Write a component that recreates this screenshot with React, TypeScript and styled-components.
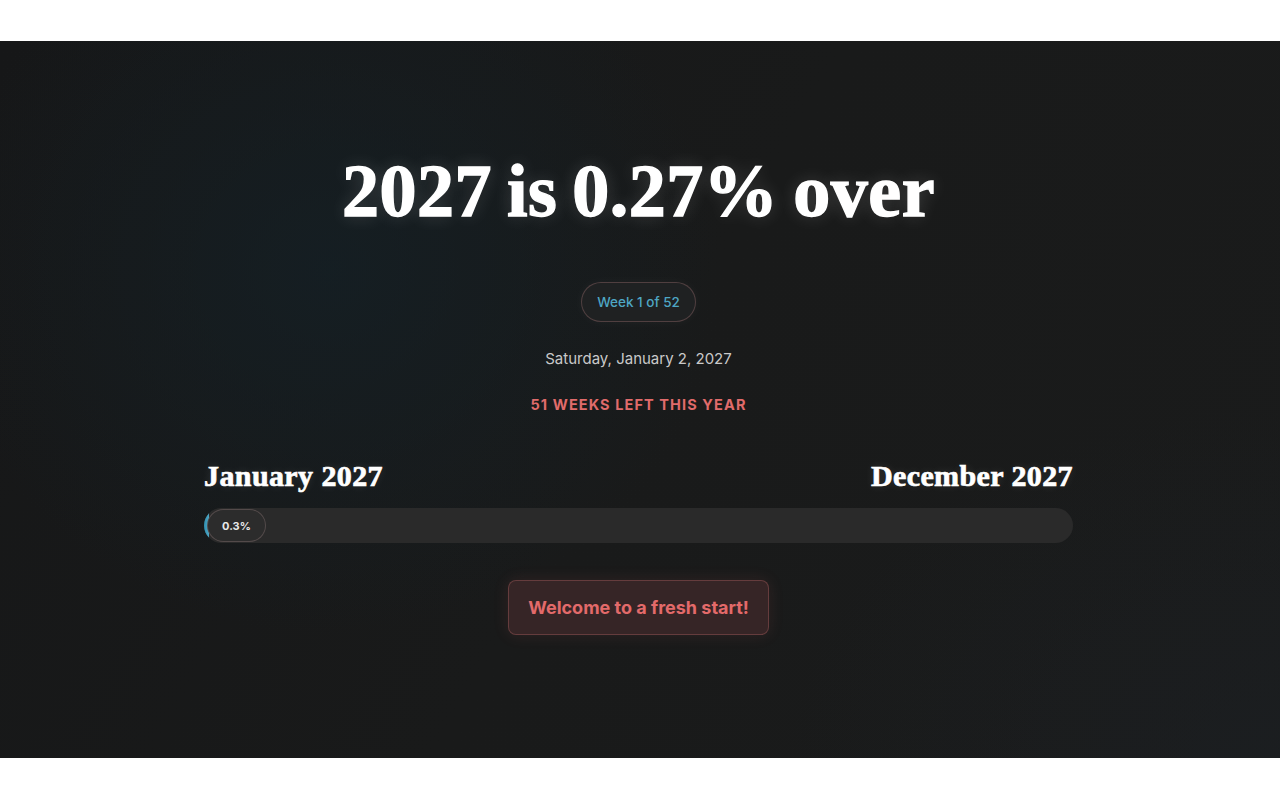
import * as React from 'react';
import styled, { createGlobalStyle } from 'styled-components';

const GlobalStyle = createGlobalStyle`
  html, body {
    margin: 0;
    padding: 0;
    background: #ffffff;
  }
  body {
    font-family: Inter, 'Noto Sans', sans-serif;
  }
`;

const YEAR = 2027;
const WEEK = 1;
const TOTAL_WEEKS = 52;
const PERCENT = 0.27;

const Page = styled.div`
  padding: 41px 0 42px;
`;

const Hero = styled.section`
  height: 717px;
  box-sizing: border-box;
  display: flex;
  flex-direction: column;
  align-items: center;
  padding: 108px 3px 0 0;
  background:
    radial-gradient(ellipse 560px 520px at 330px 230px, rgba(20, 32, 38, 0.75), rgba(20, 32, 38, 0) 70%),
    radial-gradient(ellipse 700px 500px at 1280px 717px, rgba(28, 32, 36, 0.6), rgba(28, 32, 36, 0) 70%),
    linear-gradient(120deg, #161718 0%, #191a1a 50%, #1a1b1b 100%);
  overflow: hidden;
`;

const Title = styled.h1`
  margin: 0;
  font-family: 'Liberation Serif', serif;
  font-weight: 700;
  font-size: 74px;
  line-height: 84px;
  letter-spacing: 0.5px;
  word-spacing: -4px;
  color: #ffffff;
  -webkit-text-stroke: 1.4px #ffffff;
  text-shadow: 0 0 18px rgba(255, 255, 255, 0.18);
`;

const Badge = styled.div`
  margin-top: 49px;
  height: 40px;
  box-sizing: border-box;
  padding: 0 15px;
  display: flex;
  align-items: center;
  border-radius: 20px;
  border: 1px solid rgba(120, 90, 90, 0.55);
  background: #1f2122;
  box-shadow: 0 0 12px rgba(255, 255, 255, 0.04);
  color: #4ea6c4;
  font-size: 13.5px;
  font-weight: 500;
`;

const DateLine = styled.div`
  margin-top: 27px;
  font-size: 15px;
  color: #c9c9c9;
`;

const WeeksLeft = styled.div`
  margin-top: 28px;
  font-size: 14.5px;
  font-weight: 700;
  letter-spacing: 1.1px;
  text-transform: uppercase;
  color: #e06b6b;
`;

const Timeline = styled.div`
  margin-top: 45px;
  width: 869px;
`;

const Labels = styled.div`
  display: flex;
  justify-content: space-between;
  align-items: center;
  height: 36px;
`;

const MonthLabel = styled.span`
  font-family: 'Liberation Serif', serif;
  font-weight: 700;
  font-size: 30px;
  letter-spacing: 0.4px;
  color: #ffffff;
  -webkit-text-stroke: 0.7px #ffffff;
  text-shadow: 0 0 10px rgba(255, 255, 255, 0.12);
`;

const Track = styled.div`
  position: relative;
  margin-top: 14px;
  height: 35px;
  border-radius: 18px;
  background: #2a2a2a;
  overflow: hidden;
`;

const Fill = styled.div`
  position: absolute;
  left: 0;
  top: 0;
  bottom: 0;
  background: linear-gradient(90deg, #2f8fb0, #4ea6c4);
  border-radius: 18px 0 0 18px;
`;

const Marker = styled.div`
  position: absolute;
  left: 3px;
  top: 1px;
  height: 33px;
  width: 59px;
  box-sizing: border-box;
  display: flex;
  align-items: center;
  justify-content: center;
  border-radius: 17px;
  border: 1px solid rgba(110, 95, 95, 0.6);
  background: #2c2c2c;
  color: #e8e8e8;
  font-size: 11px;
  font-weight: 700;
`;

const Greeting = styled.button`
  margin-top: 37px;
  height: 55px;
  padding: 0 19px;
  border-radius: 8px;
  border: 1px solid rgba(140, 80, 80, 0.55);
  background: #362526;
  box-shadow: 0 0 16px rgba(224, 107, 107, 0.12);
  color: #e36a6a;
  font-family: Inter, 'Noto Sans', sans-serif;
  font-size: 18px;
  font-weight: 700;
  cursor: pointer;
`;

export default function App() {
  const progress = Math.round(PERCENT * 10) / 10;
  return (
    <Page>
      <GlobalStyle />
      <Hero>
        <Title>
          {YEAR} is {PERCENT}% over
        </Title>
        <Badge>
          Week {WEEK} of {TOTAL_WEEKS}
        </Badge>
        <DateLine>Saturday, January 2, 2027</DateLine>
        <WeeksLeft>{TOTAL_WEEKS - WEEK} weeks left this year</WeeksLeft>
        <Timeline>
          <Labels>
            <MonthLabel>January {YEAR}</MonthLabel>
            <MonthLabel>December {YEAR}</MonthLabel>
          </Labels>
          <Track>
            <Fill style={{ width: `${Math.max(progress, 0.6)}%` }} />
            <Marker>{progress}%</Marker>
          </Track>
        </Timeline>
        <Greeting>Welcome to a fresh start!</Greeting>
      </Hero>
    </Page>
  );
}
